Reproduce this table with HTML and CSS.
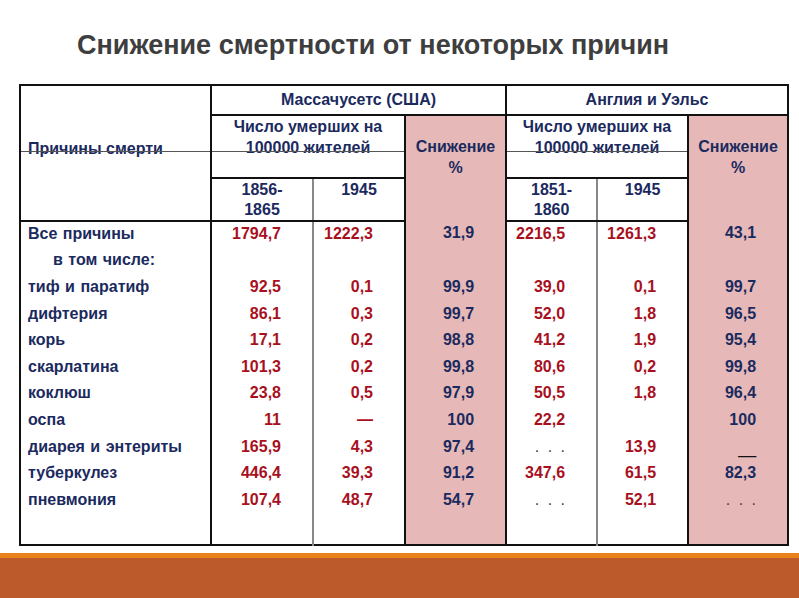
FILE: index.html
```html
<!DOCTYPE html>
<html lang="ru">
<head>
<meta charset="utf-8">
<title>Снижение смертности</title>
<link rel="stylesheet" href="styles.css">
</head>
<body>
<h1 class="title">Снижение смертности от некоторых причин</h1>
<table class="mort">
  <colgroup>
    <col class="w-cause"><col class="w-a"><col class="w-b"><col class="w-p">
    <col class="w-a2"><col class="w-b2"><col class="w-p2">
  </colgroup>
  <thead>
    <tr class="r1">
      <th class="cause-h" rowspan="3">Причины смерти</th>
      <th class="grp" colspan="3">Массачусетс (США)</th>
      <th class="grp" colspan="3">Англия и Уэльс</th>
    </tr>
    <tr class="r2">
      <th class="per" colspan="2">Число умерших на<br>100000 жителей</th>
      <th class="dec" rowspan="2">Снижение<br>%</th>
      <th class="per" colspan="2">Число умерших на<br>100000 жителей</th>
      <th class="dec" rowspan="2">Снижение<br>%</th>
    </tr>
    <tr class="r3">
      <th class="yr ya">1856-<br>1865</th>
      <th class="yr yb">1945</th>
      <th class="yr ya">1851-<br>1860</th>
      <th class="yr yb">1945</th>
    </tr>
  </thead>
  <tbody>
    <tr><td class="nm">Все причины</td><td class="a">1794,7</td><td class="b">1222,3</td><td class="p">31,9</td><td class="a">2216,5</td><td class="b">1261,3</td><td class="p">43,1</td></tr>
    <tr><td class="nm sub">в том числе:</td><td class="a"></td><td class="b"></td><td class="p"></td><td class="a"></td><td class="b"></td><td class="p"></td></tr>
    <tr><td class="nm">тиф и паратиф</td><td class="a">92,5</td><td class="b">0,1</td><td class="p">99,9</td><td class="a">39,0</td><td class="b">0,1</td><td class="p">99,7</td></tr>
    <tr><td class="nm">дифтерия</td><td class="a">86,1</td><td class="b">0,3</td><td class="p">99,7</td><td class="a">52,0</td><td class="b">1,8</td><td class="p">96,5</td></tr>
    <tr><td class="nm">корь</td><td class="a">17,1</td><td class="b">0,2</td><td class="p">98,8</td><td class="a">41,2</td><td class="b">1,9</td><td class="p">95,4</td></tr>
    <tr><td class="nm">скарлатина</td><td class="a">101,3</td><td class="b">0,2</td><td class="p">99,8</td><td class="a">80,6</td><td class="b">0,2</td><td class="p">99,8</td></tr>
    <tr><td class="nm">коклюш</td><td class="a">23,8</td><td class="b">0,5</td><td class="p">97,9</td><td class="a">50,5</td><td class="b">1,8</td><td class="p">96,4</td></tr>
    <tr><td class="nm">оспа</td><td class="a">11</td><td class="b">—</td><td class="p">100</td><td class="a">22,2</td><td class="b"></td><td class="p">100</td></tr>
    <tr><td class="nm">диарея и энтериты</td><td class="a">165,9</td><td class="b">4,3</td><td class="p">97,4</td><td class="a"><span class="dots">. . .</span></td><td class="b">13,9</td><td class="p"><span class="low">__</span></td></tr>
    <tr><td class="nm">туберкулез</td><td class="a">446,4</td><td class="b">39,3</td><td class="p">91,2</td><td class="a">347,6</td><td class="b">61,5</td><td class="p">82,3</td></tr>
    <tr><td class="nm">пневмония</td><td class="a">107,4</td><td class="b">48,7</td><td class="p">54,7</td><td class="a"><span class="dots">. . .</span></td><td class="b">52,1</td><td class="p"><span class="dots">. . .</span></td></tr>
    <tr class="filler"><td class="nm"></td><td class="a"></td><td class="b"></td><td class="p"></td><td class="a"></td><td class="b"></td><td class="p"></td></tr>
  </tbody>
</table>
<div class="band"></div>
</body>
</html>
```
FILE: styles.css
```css
html, body {
  margin: 0;
  padding: 0;
  background: #fff;
}
body {
  width: 799px;
  height: 598px;
  position: relative;
  overflow: hidden;
  font-family: "Liberation Sans", Arial, sans-serif;
}
.title {
  margin: 0;
  padding: 30px 0 0 77px;
  height: 30px;
  font-size: 27px;
  line-height: 30px;
  font-weight: bold;
  color: #3e3e3e;
}
.mort {
  margin: 24px 0 0 19px;
  width: 768px;
  table-layout: fixed;
  border-collapse: collapse;
  border: 2px solid #111;
  font-size: 16px;
  font-weight: bold;
  color: #1b2a5e;
}
.w-cause { width: 191px; }
.w-a { width: 102px; }
.w-b { width: 92px; }
.w-p { width: 101px; }
.w-a2 { width: 91px; }
.w-b2 { width: 91px; }
.w-p2 { width: 100px; }

th {
  font-weight: bold;
  padding: 0;
  text-align: center;
  position: relative;
}
.r1 { height: 30px; }
.r2 { height: 63px; }
.r3 { height: 42px; }
.cause-h {
  text-align: left;
  vertical-align: middle;
  padding: 0 0 8px 7px;
  border-bottom: 2px solid #111;
}
.cause-h::after,
.per::after {
  content: "";
  position: absolute;
  left: 0;
  right: 0;
  height: 1px;
  background: #555;
}
.cause-h::after { top: 65px; }
.per::after { top: 35px; }
.grp {
  vertical-align: middle;
  border-left: 2px solid #111;
  border-bottom: 2px solid #111;
}
.per {
  vertical-align: top;
  line-height: 21px;
  padding-top: 0;
  border-left: 2px solid #111;
  border-bottom: 2px solid #111;
}
.dec {
  vertical-align: top;
  line-height: 21px;
  padding-top: 20px;
  background: #e6b9b8;
  border-left: 2px solid #111;
}
.yr {
  vertical-align: top;
  line-height: 20px;
  padding-top: 1px;
  border-bottom: 2px solid #111;
}
.ya { border-left: 2px solid #111; }
.yb { border-left: 2px solid #888; }

td {
  height: 23.6px;
  padding: 0 0 3px 0;
  vertical-align: middle;
  line-height: 20px;
}
.nm {
  padding-left: 7px;
  white-space: nowrap;
  word-spacing: 1px;
}
.nm.sub { padding-left: 32px; }
.a, .b, .p {
  text-align: right;
  padding-right: 31px;
}
.a, .b { color: #a8101e; }
.a { border-left: 2px solid #111; }
.b { border-left: 2px solid #888; }
.p {
  background: #e6b9b8;
  color: #1b2a5e;
  border-left: 2px solid #111;
}
.filler td { height: 29px; padding: 0; }
.dots {
  color: #444;
  font-weight: normal;
  word-spacing: 4px;
}
.low {
  display: inline-block;
  color: #111;
  font-weight: normal;
  transform: translateY(2px);
}
.band {
  position: absolute;
  left: 0;
  right: 0;
  bottom: 0;
  height: 45px;
  background: #bc5a2c;
  border-top: 5px solid #e9821c;
  box-sizing: border-box;
}
```
